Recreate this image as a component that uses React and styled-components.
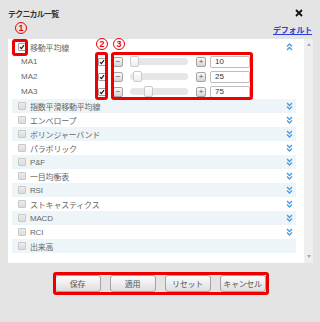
import React from "react";
import styled, { createGlobalStyle } from "styled-components";

const GlobalStyle = createGlobalStyle`
  html, body {
    margin: 0;
    padding: 0;
    background: #e4e4e4;
  }
  * {
    box-sizing: border-box;
  }
`;

const FONT = `"Liberation Sans", "Noto Sans CJK JP", sans-serif`;

const Dialog = styled.div`
  position: relative;
  width: 320px;
  height: 322px;
  background: #e4e4e4;
  font-family: ${FONT};
  display: flex;
  flex-direction: column;
`;

const Header = styled.div`
  display: flex;
  justify-content: space-between;
  align-items: center;
  height: 12px;
  margin: 7px 0 0 0;
  padding: 0 17px 0 8px;
`;

const Title = styled.div`
  font-size: 8px;
  font-weight: bold;
  color: #333;
  letter-spacing: -0.8px;
`;

const LinkRow = styled.div`
  display: flex;
  justify-content: flex-end;
  height: 12px;
  margin-top: 7px;
  padding-right: 8px;
  margin-bottom: 1px;
`;

const DefaultLink = styled.a`
  font-size: 8px;
  font-weight: bold;
  color: #2b3fd0;
  text-decoration: underline;
  line-height: 10px;
  letter-spacing: -0.2px;
`;

const Panel = styled.div`
  display: flex;
  height: 224px;
  margin: 0 7px 0 8px;
  background: #fff;
`;

const List = styled.div`
  flex: 1;
  padding: 1px 4px 0 4px;
`;

const Row = styled.div`
  display: flex;
  align-items: center;
  height: 14px;
  padding: 0 3px 0 6px;
  background: ${(p) => (p.$shaded ? "#edf5f9" : "#fff")};
`;

const RowLabel = styled.span`
  flex: 1;
  margin-left: 4px;
  font-size: 8px;
  color: #666;
  white-space: nowrap;
  letter-spacing: -0.2px;
`;

const ParamRow = styled.div`
  display: flex;
  align-items: center;
  height: 15px;
  padding-left: 9px;
`;

const ParamLabel = styled.span`
  width: 77px;
  font-size: 8px;
  color: #666;
`;

const Box = styled.span`
  display: inline-flex;
  align-items: center;
  justify-content: center;
  width: 8px;
  height: 8px;
  border: 1px solid ${(p) => (p.$checked ? "#a0a0a0" : "#c8c8c8")};
  border-radius: 1px;
  background: ${(p) =>
    p.$checked ? "#fff" : "linear-gradient(#ececec, #dcdcdc)"};
  flex: none;
`;

const StepButton = styled.span`
  display: inline-flex;
  align-items: center;
  justify-content: center;
  width: 10px;
  height: 10px;
  margin-left: ${(p) => p.$gap}px;
  border: 1px solid #a4a4a4;
  border-radius: 2px;
  background: linear-gradient(#fafafa, #d6d6d6);
  font-size: 8px;
  line-height: 1;
  color: #555;
  flex: none;
`;

const Track = styled.span`
  position: relative;
  width: 58px;
  height: 7px;
  margin-left: 7px;
  border-radius: 4px;
  background: #e6e6e6;
  flex: none;
`;

const Thumb = styled.span`
  position: absolute;
  top: -2px;
  width: 9px;
  height: 11px;
  border: 1px solid #cacaca;
  border-radius: 2px;
  background: linear-gradient(#ffffff, #ededed);
`;

const ValueInput = styled.span`
  display: flex;
  align-items: center;
  width: 40px;
  height: 12px;
  margin-left: 4px;
  padding-left: 4px;
  border: 1px solid #bdbdbd;
  border-radius: 2px;
  font-size: 8px;
  color: #333;
`;

const Scrollbar = styled.div`
  width: 9px;
  margin-left: 4px;
  background: #efefef;
  display: flex;
  flex-direction: column;
  justify-content: space-between;
  align-items: center;
  padding: 4px 0 5px;
`;

const Arrow = styled.span`
  width: 0;
  height: 0;
  border-left: 2.5px solid transparent;
  border-right: 2.5px solid transparent;
  ${(p) =>
    p.$up
      ? "border-bottom: 3px solid #a8a8a8;"
      : "border-top: 3px solid #a8a8a8;"}
`;

const Footer = styled.div`
  display: flex;
  justify-content: center;
  gap: 9px;
  margin-top: 12px;
`;

const Button = styled.span`
  display: flex;
  align-items: center;
  justify-content: center;
  width: 46px;
  height: 17px;
  border: 1px solid #a4a4a4;
  border-radius: 3px;
  background: linear-gradient(#fdfdfd, #dedede);
  font-size: 8px;
  color: #555;
  letter-spacing: -0.3px;
`;

const Marker = styled.span`
  position: absolute;
  left: ${(p) => p.$x}px;
  top: ${(p) => p.$y}px;
  width: ${(p) => p.$w}px;
  height: ${(p) => p.$h}px;
  border: 3px solid #ee0000;
  border-radius: 3px;
  pointer-events: none;
`;

const Badge = styled.span`
  position: absolute;
  left: ${(p) => p.$x}px;
  top: ${(p) => p.$y}px;
  width: 12px;
  height: 12px;
  border: 1.5px solid #ee0000;
  border-radius: 50%;
  display: flex;
  align-items: center;
  justify-content: center;
  font-size: 9px;
  font-weight: bold;
  color: #ee0000;
  line-height: 1;
`;

const Check = () => (
  <svg width="6" height="6" viewBox="0 0 6 6">
    <polyline
      points="1,3.2 2.4,4.6 5,1.2"
      fill="none"
      stroke="#222"
      strokeWidth="1.3"
    />
  </svg>
);

const Chevrons = ({ up }) => (
  <svg width="7" height="8" viewBox="0 0 7 8">
    <g
      fill="none"
      stroke="#4a9ce2"
      strokeWidth="1.4"
      transform={up ? "rotate(180 3.5 4)" : undefined}
    >
      <polyline points="1,1 3.5,3.5 6,1" />
      <polyline points="1,4.5 3.5,7 6,4.5" />
    </g>
  </svg>
);

const CloseIcon = () => (
  <svg width="8" height="8" viewBox="0 0 8 8">
    <path d="M1 1 L7 7 M7 1 L1 7" stroke="#111" strokeWidth="1.8" />
  </svg>
);

const averages = [
  { label: "MA1", value: 10 },
  { label: "MA2", value: 25 },
  { label: "MA3", value: 75 },
];

const indicators = [
  "指数平滑移動平均線",
  "エンベロープ",
  "ボリンジャーバンド",
  "パラボリック",
  "P&F",
  "一目均衡表",
  "RSI",
  "ストキャスティクス",
  "MACD",
  "RCI",
  "出来高",
];

const noChevron = ["出来高"];

export default function App() {
  return (
    <Dialog>
      <GlobalStyle />
      <Header>
        <Title>テクニカル一覧</Title>
        <CloseIcon />
      </Header>
      <LinkRow>
        <DefaultLink>デフォルト</DefaultLink>
      </LinkRow>

      <Panel>
        <List>
          <Row>
            <Box $checked>
              <Check />
            </Box>
            <RowLabel>移動平均線</RowLabel>
            <Chevrons up />
          </Row>
          {averages.map((ma) => (
            <ParamRow key={ma.label}>
              <ParamLabel>{ma.label}</ParamLabel>
              <Box $checked>
                <Check />
              </Box>
              <StepButton $gap={7}>−</StepButton>
              <Track>
                <Thumb style={{ left: ((ma.value - 10) / 230) * 50 }} />
              </Track>
              <StepButton $gap={8}>+</StepButton>
              <ValueInput>{ma.value}</ValueInput>
            </ParamRow>
          ))}
          {indicators.map((name, i) => (
            <Row key={name} $shaded={i % 2 === 0}>
              <Box />
              <RowLabel>{name}</RowLabel>
              {!noChevron.includes(name) && <Chevrons />}
            </Row>
          ))}
        </List>
        <Scrollbar>
          <Arrow $up />
          <Arrow />
        </Scrollbar>
      </Panel>

      <Footer>
        <Button>保存</Button>
        <Button>適用</Button>
        <Button>リセット</Button>
        <Button>キャンセル</Button>
      </Footer>

      <Badge $x={15} $y={22}>1</Badge>
      <Badge $x={96} $y={38}>2</Badge>
      <Badge $x={113} $y={38}>3</Badge>
      <Marker $x={12} $y={39} $w={16} $h={17} />
      <Marker $x={95} $y={52} $w={13} $h={48} />
      <Marker $x={111} $y={52} $w={142} $h={48} />
      <Marker $x={53} $y={272} $w={216} $h={23} />
    </Dialog>
  );
}
